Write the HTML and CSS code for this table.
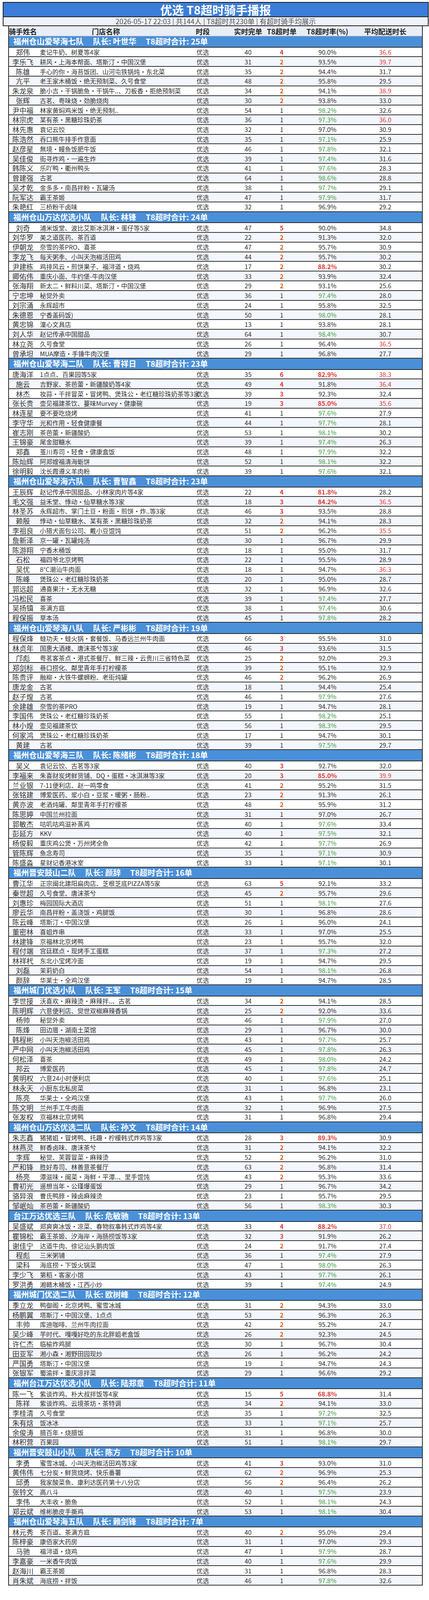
FILE: index.html
```html
<!DOCTYPE html>
<html lang="zh-CN">
<head>
<meta charset="utf-8">
<title>优选 T8超时骑手播报</title>
<link rel="stylesheet" href="styles.css">
</head>
<body>
<div class="page">
  <header class="banner">
    <div class="title">优选 T8超时骑手播报</div>
    <div class="sub">2026-05-17 22:03 | 共144人 | T8超时共230单 | 有超时骑手均展示</div>
  </header>
  <main class="board">
    <div class="head"><span>骑手姓名</span><span>门店名称</span><span>时段</span><span>实时完单</span><span>T8超时单</span><span>T8超时率(%)</span><span>平均配送时长</span></div>

    <section class="team">
      <div class="team-bar"><span>福州仓山爱琴海七队</span><span>队长: 叶世华</span><span>T8超时合计: 25单</span></div>
      <div class="row"><span class="nm">郑伟</span><span class="st">麦记牛奶、树夏等4家</span><span>优选</span><span>40</span><span class="hot">4</span><span>90.0%</span><span class="slow">36.6</span></div>
      <div class="row"><span class="nm">李乐飞</span><span class="st">耕风·上海本帮面、塔斯汀·中国汉堡</span><span>优选</span><span>31</span><span class="warn">2</span><span>93.5%</span><span class="slow">39.7</span></div>
      <div class="row"><span class="nm">陈雄</span><span class="st">手心的你·海苔饭团、山河屯铁锅炖·东北菜</span><span>优选</span><span>35</span><span class="warn">2</span><span>94.4%</span><span>31.7</span></div>
      <div class="row"><span class="nm">亢平</span><span class="st">老王家木桶饭·绝无预制菜、久号食堂</span><span>优选</span><span>48</span><span class="warn">2</span><span>95.8%</span><span>29.5</span></div>
      <div class="row"><span class="nm">朱龙泉</span><span class="st">脆小吉·干锅脆鱼·干锅牛..、刀板香·拒绝预制菜</span><span>优选</span><span>34</span><span class="warn">2</span><span>94.1%</span><span class="slow">38.9</span></div>
      <div class="row"><span class="nm">张辉</span><span class="st">古茗、粤味烧·劲脆烧肉</span><span>优选</span><span>30</span><span class="warn">2</span><span>93.8%</span><span>33.0</span></div>
      <div class="row"><span class="nm">尹中福</span><span class="st">林家黄焖鸡米饭•绝无预制..</span><span>优选</span><span>54</span><span>1</span><span class="good">98.2%</span><span>32.6</span></div>
      <div class="row"><span class="nm">林宗虎</span><span class="st">某有茶·黑糖珍珠奶茶</span><span>优选</span><span>36</span><span>1</span><span class="good">97.3%</span><span class="slow">36.0</span></div>
      <div class="row"><span class="nm">林先惠</span><span class="st">袁记云饺</span><span>优选</span><span>32</span><span>1</span><span>97.0%</span><span>30.9</span></div>
      <div class="row"><span class="nm">陈浩然</span><span class="st">吞口熊牛排手作意面</span><span>优选</span><span>35</span><span>1</span><span class="good">97.1%</span><span>25.9</span></div>
      <div class="row"><span class="nm">赵彦星</span><span class="st">無境·鳗鱼饭肥牛饭</span><span>优选</span><span>46</span><span>1</span><span class="good">97.8%</span><span>32.1</span></div>
      <div class="row"><span class="nm">吴佳俊</span><span class="st">街寻炸鸡·一遍生炸</span><span>优选</span><span>39</span><span>1</span><span class="good">97.4%</span><span>31.6</span></div>
      <div class="row"><span class="nm">韩陈义</span><span class="st">乐吖鸭·衢州鸭头</span><span>优选</span><span>41</span><span>1</span><span class="good">97.6%</span><span>28.3</span></div>
      <div class="row"><span class="nm">曾建强</span><span class="st">古茗</span><span>优选</span><span>64</span><span>1</span><span class="good">98.6%</span><span>28.8</span></div>
      <div class="row"><span class="nm">吴才乾</span><span class="st">金多多·南昌拌粉·瓦罐汤</span><span>优选</span><span>38</span><span>1</span><span class="good">97.7%</span><span>29.1</span></div>
      <div class="row"><span class="nm">阮军达</span><span class="st">霸王茶姬</span><span>优选</span><span>47</span><span>1</span><span class="good">97.9%</span><span>31.7</span></div>
      <div class="row"><span class="nm">朱艳红</span><span class="st">三桥粉干卤味</span><span>优选</span><span>32</span><span>1</span><span>96.9%</span><span>29.2</span></div>
    </section>

    <section class="team">
      <div class="team-bar"><span>福州仓山万达优选小队</span><span>队长: 林锋</span><span>T8超时合计: 24单</span></div>
      <div class="row"><span class="nm">刘奇</span><span class="st">浦米饭堂、波比艾斯冰淇淋·蛋仔等5家</span><span>优选</span><span>47</span><span class="hot">5</span><span>90.0%</span><span>34.8</span></div>
      <div class="row"><span class="nm">刘华罗</span><span class="st">美之道医药、茶百道</span><span>优选</span><span>22</span><span class="warn">2</span><span>91.3%</span><span>32.0</span></div>
      <div class="row"><span class="nm">伊朝龙</span><span class="st">奈雪的茶PRO、喜茶</span><span>优选</span><span>47</span><span class="warn">2</span><span>95.7%</span><span>30.9</span></div>
      <div class="row"><span class="nm">李龙飞</span><span class="st">每天粥季、小叫天泡椒活田鸡</span><span>优选</span><span>44</span><span class="warn">2</span><span>95.7%</span><span>30.2</span></div>
      <div class="row"><span class="nm">尹建栋</span><span class="st">鸡排风云•煎饼果子、福浔道·烧鸡</span><span>优选</span><span>17</span><span class="warn">2</span><span class="bad">88.2%</span><span>30.2</span></div>
      <div class="row"><span class="nm">卿佑伟</span><span class="st">重庆小面、牛约堡-牛肉汉堡</span><span>优选</span><span>33</span><span class="warn">2</span><span>93.9%</span><span>32.4</span></div>
      <div class="row"><span class="nm">张海翔</span><span class="st">新太二·鲜料川菜、塔斯汀·中国汉堡</span><span>优选</span><span>29</span><span class="warn">2</span><span>93.1%</span><span>25.6</span></div>
      <div class="row"><span class="nm">宁忠坤</span><span class="st">秘觉外卖</span><span>优选</span><span>36</span><span>1</span><span class="good">97.4%</span><span>28.0</span></div>
      <div class="row"><span class="nm">刘宗涌</span><span class="st">永辉超市</span><span>优选</span><span>24</span><span>1</span><span>95.8%</span><span>32.5</span></div>
      <div class="row"><span class="nm">朱德恩</span><span class="st">宁香盖码饭)</span><span>优选</span><span>50</span><span>1</span><span class="good">98.0%</span><span>28.1</span></div>
      <div class="row"><span class="nm">黄忠锦</span><span class="st">潼心文具店</span><span>优选</span><span>13</span><span>1</span><span>93.8%</span><span>28.1</span></div>
      <div class="row"><span class="nm">刘人华</span><span class="st">赵记传承中国甜品</span><span>优选</span><span>64</span><span>1</span><span class="good">98.4%</span><span>30.7</span></div>
      <div class="row"><span class="nm">林立尧</span><span class="st">久号食堂</span><span>优选</span><span>26</span><span>1</span><span>96.4%</span><span class="slow">36.5</span></div>
      <div class="row"><span class="nm">曾承坦</span><span class="st">MUA摩造·手锤牛肉汉堡</span><span>优选</span><span>29</span><span>1</span><span>96.8%</span><span>27.7</span></div>
    </section>

    <section class="team">
      <div class="team-bar"><span>福州仓山爱琴海二队</span><span>队长: 曹祥日</span><span>T8超时合计: 23单</span></div>
      <div class="row"><span class="nm">唐海洋</span><span class="st">1点点、百果园等5家</span><span>优选</span><span>35</span><span class="hot">6</span><span class="bad">82.9%</span><span class="slow">38.3</span></div>
      <div class="row"><span class="nm">施云</span><span class="st">吉野家、茶芭蕾·新疆酸奶等4家</span><span>优选</span><span>49</span><span class="hot">4</span><span>91.8%</span><span class="slow">36.4</span></div>
      <div class="row"><span class="nm">林杰</span><span class="st">妆蒜·干拌冒菜·冒烤鸭、煲珠公·老红糖珍珠奶茶等3家</span><span>优选</span><span>39</span><span class="hot">3</span><span>92.3%</span><span>32.4</span></div>
      <div class="row"><span class="nm">张长贵</span><span class="st">壶见福建茶饮、蔓味Murvey·健康碗</span><span>优选</span><span>19</span><span class="hot">3</span><span class="bad">85.0%</span><span class="slow">35.6</span></div>
      <div class="row"><span class="nm">林连星</span><span class="st">要不要吃烧烤</span><span>优选</span><span>41</span><span>1</span><span class="good">97.6%</span><span>27.9</span></div>
      <div class="row"><span class="nm">李守华</span><span class="st">光和作用·轻食健康餐</span><span>优选</span><span>44</span><span>1</span><span class="good">97.7%</span><span>28.1</span></div>
      <div class="row"><span class="nm">崔志刚</span><span class="st">茶芭蕾·新疆酸奶</span><span>优选</span><span>53</span><span>1</span><span class="good">98.1%</span><span>30.2</span></div>
      <div class="row"><span class="nm">王锦豪</span><span class="st">尾金甜糖水</span><span>优选</span><span>39</span><span>1</span><span class="good">97.4%</span><span>26.3</span></div>
      <div class="row"><span class="nm">郑鑫</span><span class="st">茧川寿司·轻食·健康盒饭</span><span>优选</span><span>48</span><span>1</span><span class="good">97.9%</span><span>32.2</span></div>
      <div class="row"><span class="nm">陈灿辉</span><span class="st">阿郑嫂福清海蛎饼</span><span>优选</span><span>52</span><span>1</span><span class="good">98.1%</span><span>32.2</span></div>
      <div class="row"><span class="nm">徐明毅</span><span class="st">沈长霞遵义羊肉粉</span><span>优选</span><span>39</span><span>1</span><span class="good">97.6%</span><span>32.1</span></div>
    </section>

    <section class="team">
      <div class="team-bar"><span>福州仓山爱琴海六队</span><span>队长: 曹智鑫</span><span>T8超时合计: 23单</span></div>
      <div class="row"><span class="nm">王辰辉</span><span class="st">赵记传承中国甜品、小林家肉片等4家</span><span>优选</span><span>22</span><span class="hot">4</span><span class="bad">81.8%</span><span>28.2</span></div>
      <div class="row"><span class="nm">毛文强</span><span class="st">益禾堂、悸动·仙草糖水等3家</span><span>优选</span><span>18</span><span class="hot">3</span><span class="bad">84.2%</span><span class="slow">36.5</span></div>
      <div class="row"><span class="nm">林圣苏</span><span class="st">永辉超市、掌门土豆·粉面·煎饼·炸..等3家</span><span>优选</span><span>46</span><span class="hot">3</span><span>93.5%</span><span>28.8</span></div>
      <div class="row"><span class="nm">赖殷</span><span class="st">悸动·仙草糖水、某有茶·黑糖珍珠奶茶</span><span>优选</span><span>32</span><span class="warn">2</span><span>94.1%</span><span>28.3</span></div>
      <div class="row"><span class="nm">李祖良</span><span class="st">小猎犬面包公司、戴小豆馄饨</span><span>优选</span><span>51</span><span class="warn">2</span><span>96.2%</span><span class="slow">35.5</span></div>
      <div class="row"><span class="nm">詹新泽</span><span class="st">京一罐·瓦罐炖汤</span><span>优选</span><span>30</span><span>1</span><span>96.7%</span><span>29.9</span></div>
      <div class="row"><span class="nm">陈游翔</span><span class="st">宁香木桶饭</span><span>优选</span><span>18</span><span>1</span><span>95.0%</span><span>31.7</span></div>
      <div class="row"><span class="nm">石松</span><span class="st">福四爷北京烤鸭</span><span>优选</span><span>22</span><span>1</span><span>95.5%</span><span>28.9</span></div>
      <div class="row"><span class="nm">吴优</span><span class="st">8°C潮汕牛肉面</span><span>优选</span><span>18</span><span>1</span><span>94.7%</span><span class="slow">36.3</span></div>
      <div class="row"><span class="nm">陈峰</span><span class="st">煲珠公·老红糖珍珠奶茶</span><span>优选</span><span>20</span><span>1</span><span>95.0%</span><span>28.7</span></div>
      <div class="row"><span class="nm">郭远超</span><span class="st">通喜果汁·无水无糖</span><span>优选</span><span>32</span><span>1</span><span>96.9%</span><span>32.6</span></div>
      <div class="row"><span class="nm">冯松民</span><span class="st">喜茶</span><span>优选</span><span>39</span><span>1</span><span class="good">97.4%</span><span>27.7</span></div>
      <div class="row"><span class="nm">吴扬镇</span><span class="st">茶满方庭</span><span>优选</span><span>38</span><span>1</span><span class="good">97.4%</span><span>30.6</span></div>
      <div class="row"><span class="nm">程保振</span><span class="st">草本汤</span><span>优选</span><span>45</span><span>1</span><span class="good">97.8%</span><span>28.2</span></div>
    </section>

    <section class="team">
      <div class="team-bar"><span>福州仓山爱琴海八队</span><span>队长: 严彬彬</span><span>T8超时合计: 19单</span></div>
      <div class="row"><span class="nm">程保烽</span><span class="st">蛙功夫·蛙火锅·套餐饭、马香远兰州牛肉面</span><span>优选</span><span>66</span><span class="hot">3</span><span>95.5%</span><span>31.0</span></div>
      <div class="row"><span class="nm">林贞年</span><span class="st">国惠大酒楼、唐沫茶兮等3家</span><span>优选</span><span>46</span><span class="hot">3</span><span>93.6%</span><span>31.5</span></div>
      <div class="row"><span class="nm">邝彪</span><span class="st">粤茗客茶点·港式茶餐厅、鲜三辣·云贵川三省特色菜</span><span>优选</span><span>25</span><span class="warn">2</span><span>92.0%</span><span>29.3</span></div>
      <div class="row"><span class="nm">郑剑标</span><span class="st">巷口捞化、鄰里青年手打柠檬茶</span><span>优选</span><span>39</span><span class="warn">2</span><span>95.1%</span><span>32.9</span></div>
      <div class="row"><span class="nm">陈贵评</span><span class="st">融柳·大铁牛螺蛳粉、老街炖罐</span><span>优选</span><span>46</span><span class="warn">2</span><span>96.2%</span><span>26.9</span></div>
      <div class="row"><span class="nm">唐龙金</span><span class="st">古茗</span><span>优选</span><span>18</span><span>1</span><span>94.4%</span><span>25.4</span></div>
      <div class="row"><span class="nm">赵子煌</span><span class="st">古茗</span><span>优选</span><span>46</span><span>1</span><span class="good">97.9%</span><span>27.6</span></div>
      <div class="row"><span class="nm">余建雄</span><span class="st">奈雪的茶PRO</span><span>优选</span><span>19</span><span>1</span><span>94.7%</span><span>28.1</span></div>
      <div class="row"><span class="nm">李国伟</span><span class="st">煲珠公·老红糖珍珠奶茶</span><span>优选</span><span>55</span><span>1</span><span class="good">98.2%</span><span>25.1</span></div>
      <div class="row"><span class="nm">林小煌</span><span class="st">壶见福建茶饮</span><span>优选</span><span>56</span><span>1</span><span class="good">98.3%</span><span>29.5</span></div>
      <div class="row"><span class="nm">何家鸿</span><span class="st">煲珠公·老红糖珍珠奶茶</span><span>优选</span><span>17</span><span>1</span><span>94.7%</span><span>30.1</span></div>
      <div class="row"><span class="nm">黄建</span><span class="st">古茗</span><span>优选</span><span>39</span><span>1</span><span class="good">97.5%</span><span>29.7</span></div>
    </section>

    <section class="team">
      <div class="team-bar"><span>福州仓山爱琴海三队</span><span>队长: 陈绪彬</span><span>T8超时合计: 18单</span></div>
      <div class="row"><span class="nm">吴义</span><span class="st">袁记云饺、古茗等3家</span><span>优选</span><span>40</span><span class="hot">3</span><span>92.7%</span><span>32.0</span></div>
      <div class="row"><span class="nm">李福来</span><span class="st">朱喜财炭烤鲜货铺、DQ·蛋糕·冰淇淋等3家</span><span>优选</span><span>20</span><span class="hot">3</span><span class="bad">85.0%</span><span class="slow">39.9</span></div>
      <div class="row"><span class="nm">兰业银</span><span class="st">7-11便利店、赵一鸣零食</span><span>优选</span><span>41</span><span class="warn">2</span><span>95.2%</span><span>31.5</span></div>
      <div class="row"><span class="nm">张铭建</span><span class="st">博爱医药、浆小白·豆浆·暖粥·肠粉..</span><span>优选</span><span>23</span><span class="warn">2</span><span>91.3%</span><span>26.1</span></div>
      <div class="row"><span class="nm">黄亦波</span><span class="st">老酒炖罐、鄰里青年手打柠檬茶</span><span>优选</span><span>48</span><span class="warn">2</span><span>95.9%</span><span>31.2</span></div>
      <div class="row"><span class="nm">陈思婷</span><span class="st">中国兰州拉面</span><span>优选</span><span>31</span><span>1</span><span>97.0%</span><span>26.7</span></div>
      <div class="row"><span class="nm">郭敏杰</span><span class="st">咕叽咕鸡滋补蒸鸡</span><span>优选</span><span>40</span><span>1</span><span class="good">97.6%</span><span>33.4</span></div>
      <div class="row"><span class="nm">彭延方</span><span class="st">KKV</span><span>优选</span><span>40</span><span>1</span><span class="good">97.5%</span><span>32.1</span></div>
      <div class="row"><span class="nm">杨俊毅</span><span class="st">重庆鸡公煲·万州烤全鱼</span><span>优选</span><span>42</span><span>1</span><span class="good">97.7%</span><span>26.9</span></div>
      <div class="row"><span class="nm">管陈辉</span><span class="st">鱼念寿司</span><span>优选</span><span>35</span><span>1</span><span class="good">97.1%</span><span>30.9</span></div>
      <div class="row"><span class="nm">陈盛淼</span><span class="st">星财记香港冰室</span><span>优选</span><span>33</span><span>1</span><span class="good">97.1%</span><span>30.1</span></div>
    </section>

    <section class="team">
      <div class="team-bar"><span>福州晋安鼓山二队</span><span>队长: 颜辞</span><span>T8超时合计: 16单</span></div>
      <div class="row"><span class="nm">曹江华</span><span class="st">正宗闽北建阳扁肉店、芝根芝底PIZZA等5家</span><span>优选</span><span>63</span><span class="hot">5</span><span>92.1%</span><span>33.2</span></div>
      <div class="row"><span class="nm">秦世超</span><span class="st">久号食堂、唐沫茶兮</span><span>优选</span><span>45</span><span class="warn">2</span><span>95.7%</span><span>29.6</span></div>
      <div class="row"><span class="nm">刘惠珍</span><span class="st">梅园国际大酒店</span><span>优选</span><span>51</span><span>1</span><span class="good">98.1%</span><span>27.6</span></div>
      <div class="row"><span class="nm">廖云华</span><span class="st">南昌拌粉·盖浇饭·鸡腿饭</span><span>优选</span><span>30</span><span>1</span><span>96.8%</span><span>28.6</span></div>
      <div class="row"><span class="nm">陈云峰</span><span class="st">塔斯汀·中国汉堡</span><span>优选</span><span>26</span><span>1</span><span>96.0%</span><span>24.1</span></div>
      <div class="row"><span class="nm">董密林</span><span class="st">喜姐炸串</span><span>优选</span><span>33</span><span>1</span><span>97.0%</span><span>25.5</span></div>
      <div class="row"><span class="nm">林建锋</span><span class="st">京福林北京烤鸭</span><span>优选</span><span>23</span><span>1</span><span>95.7%</span><span>32.0</span></div>
      <div class="row"><span class="nm">程付端</span><span class="st">宫廷糕点·现烤手工蛋糕</span><span>优选</span><span>37</span><span>1</span><span class="good">97.3%</span><span>27.2</span></div>
      <div class="row"><span class="nm">林祥杙</span><span class="st">东北小宝烤冷面</span><span>优选</span><span>19</span><span>1</span><span>94.7%</span><span>29.5</span></div>
      <div class="row"><span class="nm">刘磊</span><span class="st">茉莉奶白</span><span>优选</span><span>54</span><span>1</span><span class="good">98.1%</span><span>26.8</span></div>
      <div class="row"><span class="nm">颜辞</span><span class="st">华莱士·全鸡汉堡</span><span>优选</span><span>19</span><span>1</span><span>94.7%</span><span>28.5</span></div>
    </section>

    <section class="team">
      <div class="team-bar"><span>福州城门优选小队</span><span>队长: 王军</span><span>T8超时合计: 15单</span></div>
      <div class="row"><span class="nm">李世接</span><span class="st">沃喜欢·麻辣烫·麻辣拌..、古茗</span><span>优选</span><span>34</span><span class="warn">2</span><span>94.1%</span><span>28.5</span></div>
      <div class="row"><span class="nm">陈明辉</span><span class="st">六意便利店、觉世双椒麻辣香锅</span><span>优选</span><span>25</span><span class="warn">2</span><span>92.0%</span><span>33.6</span></div>
      <div class="row"><span class="nm">杨帅</span><span class="st">秘觉外卖</span><span>优选</span><span>46</span><span>1</span><span class="good">97.9%</span><span>27.0</span></div>
      <div class="row"><span class="nm">陈烽</span><span class="st">田边厝·湖南土菜馆</span><span>优选</span><span>29</span><span>1</span><span>96.7%</span><span>30.0</span></div>
      <div class="row"><span class="nm">韩程彬</span><span class="st">小叫天泡椒活田鸡</span><span>优选</span><span>43</span><span>1</span><span class="good">97.7%</span><span>25.7</span></div>
      <div class="row"><span class="nm">严中网</span><span class="st">小叫天泡椒活田鸡</span><span>优选</span><span>45</span><span>1</span><span class="good">97.8%</span><span>26.3</span></div>
      <div class="row"><span class="nm">何松泽</span><span class="st">喜茶</span><span>优选</span><span>49</span><span>1</span><span class="good">98.0%</span><span>24.2</span></div>
      <div class="row"><span class="nm">邦云</span><span class="st">博爱医药</span><span>优选</span><span>45</span><span>1</span><span class="good">97.8%</span><span>24.7</span></div>
      <div class="row"><span class="nm">黄明权</span><span class="st">六意24小时便利店</span><span>优选</span><span>40</span><span>1</span><span class="good">97.6%</span><span>25.1</span></div>
      <div class="row"><span class="nm">林永天</span><span class="st">小厨东北私房菜</span><span>优选</span><span>31</span><span>1</span><span>96.8%</span><span>23.1</span></div>
      <div class="row"><span class="nm">陈亮</span><span class="st">华莱士·全鸡汉堡</span><span>优选</span><span>43</span><span>1</span><span class="good">97.7%</span><span>26.0</span></div>
      <div class="row"><span class="nm">陈文明</span><span class="st">兰州手工牛肉面</span><span>优选</span><span>32</span><span>1</span><span>96.9%</span><span>27.5</span></div>
      <div class="row"><span class="nm">张发权</span><span class="st">京福林北京烤鸭</span><span>优选</span><span>31</span><span>1</span><span>96.8%</span><span>29.4</span></div>
    </section>

    <section class="team">
      <div class="team-bar"><span>福州仓山万达优选二队</span><span>队长: 孙文</span><span>T8超时合计: 14单</span></div>
      <div class="row"><span class="nm">朱志鑫</span><span class="st">猪猪姐·冒烤鸭、托趣·柠檬韩式炸鸡等3家</span><span>优选</span><span>28</span><span class="hot">3</span><span class="bad">89.3%</span><span>30.9</span></div>
      <div class="row"><span class="nm">林燕灵</span><span class="st">鲜香卤味、唐沫茶兮</span><span>优选</span><span>31</span><span class="warn">2</span><span>94.1%</span><span>32.2</span></div>
      <div class="row"><span class="nm">李辉</span><span class="st">秘觉、芙蓉冒菜·麻辣烫</span><span>优选</span><span>52</span><span class="warn">2</span><span>96.2%</span><span>31.0</span></div>
      <div class="row"><span class="nm">严和锋</span><span class="st">胜好寿司、林善意茶餐厅</span><span>优选</span><span>63</span><span class="warn">2</span><span>96.8%</span><span>31.4</span></div>
      <div class="row"><span class="nm">杨亮</span><span class="st">潭滋味·闽菜·海鲜·平潭..、里手馄饨</span><span>优选</span><span>43</span><span class="warn">2</span><span>95.3%</span><span>33.6</span></div>
      <div class="row"><span class="nm">曹初光</span><span class="st">遥想当年·公瑾爆蛋饭</span><span>优选</span><span>29</span><span>1</span><span>96.7%</span><span>34.2</span></div>
      <div class="row"><span class="nm">骆异浪</span><span class="st">曹氏鸭脖·辣卤麻辣烫</span><span>优选</span><span>23</span><span>1</span><span>95.7%</span><span>29.5</span></div>
      <div class="row"><span class="nm">邹岷灿</span><span class="st">茶芭蕾·新疆酸奶</span><span>优选</span><span>56</span><span>1</span><span class="good">98.3%</span><span>30.3</span></div>
    </section>

    <section class="team">
      <div class="team-bar"><span>台江万达优选三队</span><span>队长: 危敏驰</span><span>T8超时合计: 13单</span></div>
      <div class="row"><span class="nm">吴盛斌</span><span class="st">郑爽爽冰饭·凉菜、春物叙事韩式炸鸡等4家</span><span>优选</span><span>33</span><span class="hot">4</span><span class="bad">88.2%</span><span class="slow">37.0</span></div>
      <div class="row"><span class="nm">瞿锦松</span><span class="st">霸王茶姬、汐海岸·海肠捞饭等3家</span><span>优选</span><span>32</span><span class="hot">3</span><span>91.9%</span><span>26.2</span></div>
      <div class="row"><span class="nm">谢佳宁</span><span class="st">达道牛肉、徐记汕头鹅肉饭</span><span>优选</span><span>24</span><span class="warn">2</span><span>91.7%</span><span>27.4</span></div>
      <div class="row"><span class="nm">程彪</span><span class="st">三米粥铺</span><span>优选</span><span>36</span><span>1</span><span class="good">97.4%</span><span>27.9</span></div>
      <div class="row"><span class="nm">梁科</span><span class="st">海底捞·下饭火锅菜</span><span>优选</span><span>47</span><span>1</span><span class="good">98.0%</span><span>26.3</span></div>
      <div class="row"><span class="nm">李少飞</span><span class="st">第稻·客家小馆</span><span>优选</span><span>43</span><span>1</span><span class="good">97.7%</span><span>26.1</span></div>
      <div class="row"><span class="nm">罗洪勇</span><span class="st">湘赣木桶饭·江西小炒</span><span>优选</span><span>39</span><span>1</span><span class="good">97.4%</span><span>24.9</span></div>
    </section>

    <section class="team">
      <div class="team-bar"><span>福州城门优选二队</span><span>队长: 欧树峰</span><span>T8超时合计: 12单</span></div>
      <div class="row"><span class="nm">季立龙</span><span class="st">鸭御阁·北京烤鸭、蜜雪冰城</span><span>优选</span><span>31</span><span class="warn">2</span><span>94.3%</span><span>33.0</span></div>
      <div class="row"><span class="nm">杨鹏翼</span><span class="st">塔斯汀·中国汉堡、1点点</span><span>优选</span><span>53</span><span class="warn">2</span><span>96.3%</span><span>26.3</span></div>
      <div class="row"><span class="nm">丰帅</span><span class="st">库迪咖啡、兰州牛肉拉面</span><span>优选</span><span>42</span><span class="warn">2</span><span>95.2%</span><span>24.7</span></div>
      <div class="row"><span class="nm">吴少峰</span><span class="st">芋时代、嘎嘎好吃的东北胖姐老盒饭</span><span>优选</span><span>26</span><span class="warn">2</span><span>92.3%</span><span>24.5</span></div>
      <div class="row"><span class="nm">许仁杰</span><span class="st">临榆炸鸡腿</span><span>优选</span><span>30</span><span>1</span><span>96.7%</span><span>30.4</span></div>
      <div class="row"><span class="nm">田亚军</span><span class="st">湘小森·湘野田园现炒</span><span>优选</span><span>26</span><span>1</span><span>96.2%</span><span>24.2</span></div>
      <div class="row"><span class="nm">严国勇</span><span class="st">塔斯汀·中国汉堡</span><span>优选</span><span>19</span><span>1</span><span>94.7%</span><span>24.3</span></div>
      <div class="row"><span class="nm">张银军</span><span class="st">蜀渝拌·重庆凉拌菜</span><span>优选</span><span>29</span><span>1</span><span>96.6%</span><span>29.2</span></div>
    </section>

    <section class="team">
      <div class="team-bar"><span>福州台江万达优选小队</span><span>队长: 陆郑章</span><span>T8超时合计: 11单</span></div>
      <div class="row"><span class="nm">陈一飞</span><span class="st">紫谈炸鸡、朴大叔拌饭等4家</span><span>优选</span><span>15</span><span class="hot">5</span><span class="bad">68.8%</span><span>31.4</span></div>
      <div class="row"><span class="nm">陈祥</span><span class="st">紫谈炸鸡、云境茶坊·茶特调</span><span>优选</span><span>34</span><span class="warn">2</span><span>94.1%</span><span>33.0</span></div>
      <div class="row"><span class="nm">李桂清</span><span class="st">久号食堂</span><span>优选</span><span>35</span><span>1</span><span class="good">97.2%</span><span>32.5</span></div>
      <div class="row"><span class="nm">朱有焓</span><span class="st">饭冰冰</span><span>优选</span><span>33</span><span>1</span><span class="good">97.1%</span><span>25.7</span></div>
      <div class="row"><span class="nm">余俊涛</span><span class="st">腊百年·烧腊饭</span><span>优选</span><span>31</span><span>1</span><span>96.8%</span><span>30.0</span></div>
      <div class="row"><span class="nm">林积营</span><span class="st">百果园</span><span>优选</span><span>51</span><span>1</span><span class="good">98.1%</span><span>29.7</span></div>
    </section>

    <section class="team">
      <div class="team-bar"><span>福州晋安鼓山小队</span><span>队长: 陈方</span><span>T8超时合计: 10单</span></div>
      <div class="row"><span class="nm">李勇</span><span class="st">蜜雪冰城、小叫天泡椒活田鸡等3家</span><span>优选</span><span>41</span><span class="hot">3</span><span>93.0%</span><span>31.0</span></div>
      <div class="row"><span class="nm">黄伟伟</span><span class="st">七分炭·鲜货烧烤、快乐番薯</span><span>优选</span><span>62</span><span class="warn">2</span><span>96.9%</span><span>25.3</span></div>
      <div class="row"><span class="nm">邱勇</span><span class="st">我家酸菜鱼、康利达医药第十八分店</span><span>优选</span><span>56</span><span class="warn">2</span><span>96.4%</span><span>26.2</span></div>
      <div class="row"><span class="nm">张铃文</span><span class="st">高八斗</span><span>优选</span><span>40</span><span>1</span><span class="good">97.5%</span><span>23.9</span></div>
      <div class="row"><span class="nm">李伟</span><span class="st">大丰收·脆鱼</span><span>优选</span><span>52</span><span>1</span><span class="good">98.1%</span><span>24.3</span></div>
      <div class="row"><span class="nm">郑云斌</span><span class="st">维彬脆皮手撕鸡</span><span>优选</span><span>53</span><span>1</span><span class="good">98.1%</span><span>30.4</span></div>
    </section>

    <section class="team">
      <div class="team-bar"><span>福州仓山爱琴海五队</span><span>队长: 赖剑锋</span><span>T8超时合计: 7单</span></div>
      <div class="row"><span class="nm">林元秀</span><span class="st">茶百道、茶满方庭</span><span>优选</span><span>40</span><span class="warn">2</span><span>95.0%</span><span>29.4</span></div>
      <div class="row"><span class="nm">陈梓豪</span><span class="st">康佰家大药房</span><span>优选</span><span>31</span><span>1</span><span>97.0%</span><span>29.3</span></div>
      <div class="row"><span class="nm">马驰</span><span class="st">福浔道·烧鸡</span><span>优选</span><span>47</span><span>1</span><span class="good">97.9%</span><span>28.7</span></div>
      <div class="row"><span class="nm">李嘉豪</span><span class="st">一米香牛肉饭</span><span>优选</span><span>40</span><span>1</span><span class="good">97.6%</span><span>29.9</span></div>
      <div class="row"><span class="nm">赵海川</span><span class="st">霸王茶姬</span><span>优选</span><span>31</span><span>1</span><span>96.8%</span><span>28.3</span></div>
      <div class="row"><span class="nm">肖朱斌</span><span class="st">海底捞·拌饭</span><span>优选</span><span>46</span><span>1</span><span class="good">97.8%</span><span>32.6</span></div>
    </section>
  </main>
</div>
</body>
</html>
```
FILE: styles.css
```css
/* The reference frame is 4589px tall; vertical sizes are expressed in
   units of that frame so the board keeps its proportions in the window. */
:root {
  --u: calc(100vh / 4589);
}

* {
  box-sizing: border-box;
}

html,
body {
  margin: 0;
  background: #ffffff;
}

body {
  color: #333333;
  font-family: "Noto Sans CJK SC", "Noto Sans", sans-serif;
}

.page {
  padding: calc(6 * var(--u)) 1px 0 7px;
}

/* ---------- banner ---------- */
.banner {
  border: 2px solid #1e1e1e;
}

.title {
  height: calc(41 * var(--u));
  line-height: calc(39 * var(--u));
  background: #3b7dd8;
  border-bottom: 2px solid #1e1e1e;
  color: #ffffff;
  font-size: 30px;
  font-weight: 700;
  text-align: center;
}

.sub {
  height: calc(24 * var(--u));
  line-height: calc(24 * var(--u));
  background: #eef2f9;
  color: #555555;
  font-size: 18px;
  text-align: center;
}

/* ---------- board ---------- */
.board {
  margin: 0 15px 0 14px;
  border-left: 2px solid #2a2a2a;
  border-right: 2px solid #2a2a2a;
}

.head,
.row {
  display: grid;
  grid-template-columns: 71px 354px 142px 90px 82px 152px 144px 1fr;
  align-items: center;
}

.head > span,
.row > span {
  display: flex;
  justify-content: center;
  white-space: nowrap;
}

.head {
  height: calc(29 * var(--u));
  line-height: 22px;
  background: #e8edf6;
  border-bottom: 1px solid #a3aab5;
  color: #222222;
  font-size: 18px;
  font-weight: 700;
}

.team-bar {
  display: flex;
  align-items: center;
  gap: 24px;
  height: calc(31.8 * var(--u));
  padding-left: 11px;
  background: #4a90d9;
  border-bottom: 2px solid #2a2a2a;
  color: #ffffff;
  font-size: 20px;
  line-height: 24px;
  font-weight: 700;
  white-space: nowrap;
}

.row {
  height: calc(27.78 * var(--u));
  background: #ffffff;
  border-bottom: 2px solid #333333;
  font-size: 16px;
  line-height: 20px;
}

.row:nth-child(odd) {
  background: #f3f6fc;
}

.row > .nm {
  font-size: 18px;
}

.row > .st {
  justify-content: flex-start;
  padding-left: 8px;
}

/* ---------- value colours ---------- */
.hot {
  color: #e53935;
  font-weight: 700;
}

.warn {
  color: #e8590c;
  font-weight: 700;
}

.good {
  color: #43a047;
}

.bad {
  color: #e53935;
  font-weight: 700;
}

.slow {
  color: #e53935;
}
```
